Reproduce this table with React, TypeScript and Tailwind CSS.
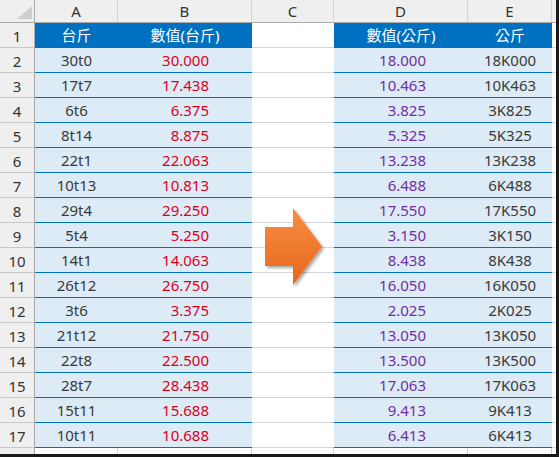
import React from "react";

const rows = [
  ["30t0", "30.000", "18.000", "18K000"],
  ["17t7", "17.438", "10.463", "10K463"],
  ["6t6", "6.375", "3.825", "3K825"],
  ["8t14", "8.875", "5.325", "5K325"],
  ["22t1", "22.063", "13.238", "13K238"],
  ["10t13", "10.813", "6.488", "6K488"],
  ["29t4", "29.250", "17.550", "17K550"],
  ["5t4", "5.250", "3.150", "3K150"],
  ["14t1", "14.063", "8.438", "8K438"],
  ["26t12", "26.750", "16.050", "16K050"],
  ["3t6", "3.375", "2.025", "2K025"],
  ["21t12", "21.750", "13.050", "13K050"],
  ["22t8", "22.500", "13.500", "13K500"],
  ["28t7", "28.438", "17.063", "17K063"],
  ["15t11", "15.688", "9.413", "9K413"],
  ["10t11", "10.688", "6.413", "6K413"],
];

function Arrow() {
  return (
    <svg className="absolute left-[262px] top-[205px]" width="66" height="86" viewBox="0 0 66 86">
      <defs>
        <linearGradient id="og" x1="0" y1="0" x2="0" y2="1">
          <stop offset="0" stopColor="#f78d42" />
          <stop offset="1" stopColor="#e8681d" />
        </linearGradient>
        <filter id="sh" x="-20%" y="-20%" width="140%" height="140%">
          <feDropShadow dx="2" dy="2" stdDeviation="1.5" floodColor="#000" floodOpacity="0.35" />
        </filter>
      </defs>
      <polygon
        points="3,22 31,22 31,3 60,41.5 31,80 31,61 3,61"
        fill="url(#og)"
        filter="url(#sh)"
      />
    </svg>
  );
}

export default function App() {
  return (
    <div className="relative h-[457px] w-[559px] overflow-hidden border-b-[3px] border-r-[3px] border-[#1a1a1a] bg-white font-['Noto_Sans','Noto_Sans_CJK_TC',sans-serif] text-[15px] text-[#333]">
      {/* column header */}
      <div className="flex h-[23px] border-b border-[#ababab] bg-[#efefef]">
        <div className="relative w-[35px] shrink-0 border-r border-[#ababab]">
          <div className="absolute left-[17px] top-[6px] h-0 w-0 border-b-[13px] border-l-[15px] border-b-[#cfcfcf] border-l-transparent" />
        </div>
        {[
          ["A", "w-[83px]"],
          ["B", "w-[134px]"],
          ["C", "w-[82px]"],
          ["D", "w-[134px]"],
          ["E", "w-[84px]"],
        ].map(([l, w]) => (
          <div key={l} className={`${w} flex shrink-0 items-center justify-center border-r border-[#d4d4d4] leading-none`}>
            {l}
          </div>
        ))}
        <div className="flex-1" />
      </div>

      {/* row 1 */}
      <div className="flex h-[25px]">
        <div className="flex w-[35px] shrink-0 items-center justify-center border-b border-r border-[#c8c8c8] border-r-[#ababab] bg-[#efefef] pt-[2px]">
          1
        </div>
        <div className="flex w-[217px] shrink-0 border-b border-[#0070c0] bg-[#0070c0] text-white">
          <div className="flex w-[83px] items-center justify-center pt-[1px]">台斤</div>
          <div className="flex w-[134px] items-center justify-center pt-[1px]">數值(台斤)</div>
        </div>
        <div className="w-[82px] shrink-0 border-b border-[#d4d4d4]" />
        <div className="flex w-[218px] shrink-0 border-b border-[#0070c0] bg-[#0070c0] text-white">
          <div className="flex w-[134px] items-center justify-center pt-[1px]">數值(公斤)</div>
          <div className="flex w-[84px] items-center justify-center pt-[1px]">公斤</div>
        </div>
        <div className="flex-1 border-b border-[#d4d4d4]" />
      </div>

      {rows.map((r, i) => (
        <div key={i} className="flex h-[25px]">
          <div className="flex w-[35px] shrink-0 items-center justify-center border-b border-r border-[#c8c8c8] border-r-[#ababab] bg-[#efefef] pt-[2px]">
            {i + 2}
          </div>
          <div className="flex w-[217px] shrink-0 border-b border-[#0070c0] bg-[#ddebf7]">
            <div className="flex w-[83px] items-center justify-center pt-[1px] text-[#3a3a3a]">{r[0]}</div>
            <div className="flex w-[134px] items-center justify-end pr-[43px] pt-[1px] text-[#d9001b]">{r[1]}</div>
          </div>
          <div className="w-[82px] shrink-0 border-b border-[#d4d4d4]" />
          <div className="flex w-[218px] shrink-0 border-b border-[#0070c0] bg-[#ddebf7]">
            <div className="flex w-[134px] items-center justify-end pr-[42px] pt-[1px] text-[#7030a0]">{r[2]}</div>
            <div className="flex w-[84px] items-center justify-center pt-[1px] text-[#3a3a3a]">{r[3]}</div>
          </div>
          <div className="flex-1 border-b border-[#d4d4d4]" />
        </div>
      ))}

      {/* partial row 18 */}
      <div className="flex h-[10px]">
        <div className="w-[35px] shrink-0 border-r border-[#ababab] bg-[#efefef]" />
        <div className="w-[83px] shrink-0 border-r border-[#d4d4d4]" />
        <div className="w-[134px] shrink-0 border-r border-[#d4d4d4]" />
        <div className="w-[82px] shrink-0 border-r border-[#d4d4d4]" />
        <div className="w-[134px] shrink-0 border-r border-[#d4d4d4]" />
        <div className="w-[84px] shrink-0 border-r border-[#d4d4d4]" />
        <div className="flex-1" />
      </div>

      <Arrow />
    </div>
  );
}
